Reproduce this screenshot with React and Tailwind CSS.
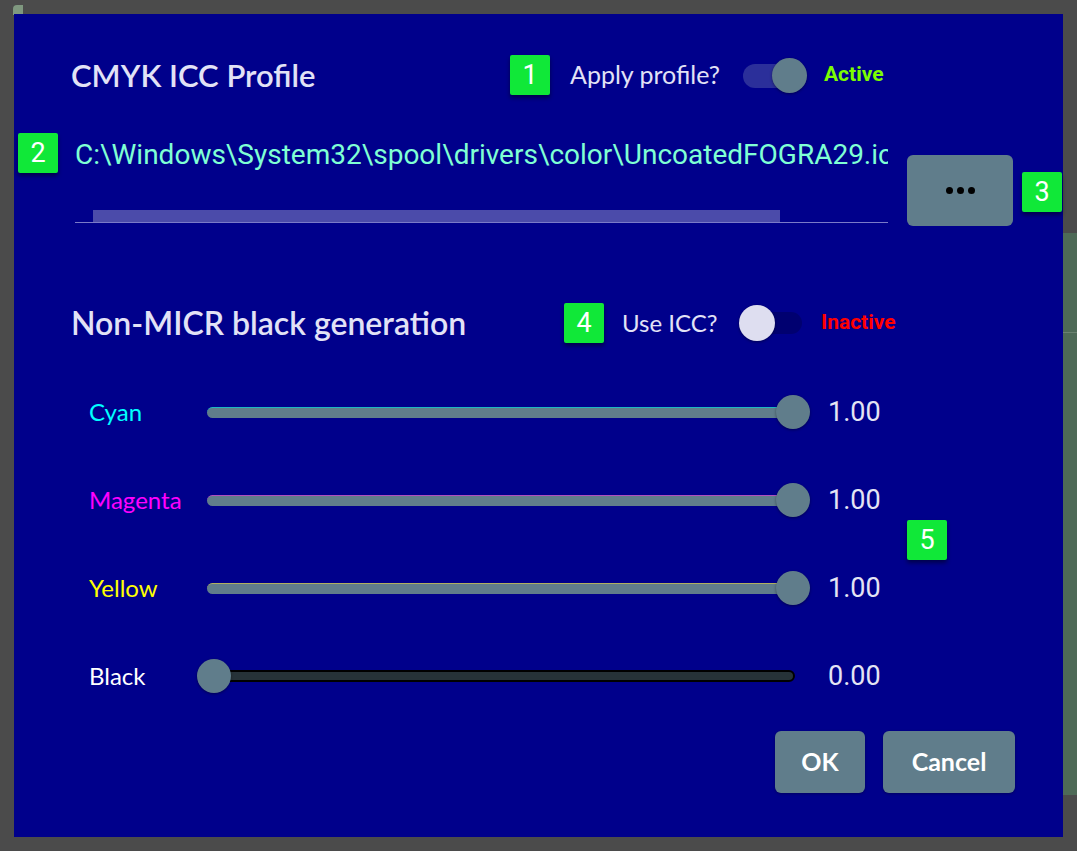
import React from 'react';

const sans = { fontFamily: 'Lato, "Open Sans", sans-serif' };
const roboto = { fontFamily: 'Roboto, "Liberation Sans", sans-serif' };

const Badge = ({ n, className = '' }) => (
  <div
    className={`flex h-[40px] w-[40px] items-center justify-center rounded-[2px] bg-[#10e838] text-[27px] leading-none text-white shadow-[0_3px_4px_rgba(0,0,0,0.45)] ${className}`}
    style={roboto}
  >
    {n}
  </div>
);

const channels = [
  { name: 'Cyan', color: 'text-[#00ffff]', edge: 'border-[#1fb7c0]', value: 1 },
  { name: 'Magenta', color: 'text-[#ff00ff]', edge: 'border-[#b050c0]', value: 1 },
  { name: 'Yellow', color: 'text-[#ffff00]', edge: 'border-[#b0b060]', value: 1 },
  { name: 'Black', color: 'text-white', edge: '', value: 0 },
];

const SliderRow = ({ name, color, edge, value }) => (
  <div className="flex h-[44px] items-center">
    <div className={`ml-[18px] w-[118px] text-[24px] ${color}`} style={sans}>
      {name}
    </div>
    <div className="relative flex h-[44px] w-[588px] items-center">
      {value > 0 ? (
        <div className={`h-[11px] w-full rounded-full border-t bg-[#607d8b] ${edge}`} />
      ) : (
        <div className="h-[12px] w-full rounded-full border-2 border-black bg-[#263238]" />
      )}
      <div
        className="absolute top-[5px] h-[34px] w-[34px] rounded-full bg-[#607d8b] shadow-[0_1px_3px_rgba(0,0,0,0.4)]"
        style={{ left: -10 + value * 579 }}
      />
    </div>
    <div className="ml-[33px] text-[27px] text-[#e4e4f4]" style={roboto}>
      {value.toFixed(2)}
    </div>
  </div>
);

export default function App() {
  return (
    <div className="relative h-[851px] w-[1077px] overflow-hidden bg-[#4b4b4b]">
      {/* stuff behind the dialog */}
      <div className="absolute left-[13px] top-[5px] h-[10px] w-[10px] rounded-tl-[4px] bg-[#7f987f]" />
      <div className="absolute left-[1063px] top-[233px] h-[562px] w-[14px] bg-[#4e6a57]">
        <div className="mt-[99px] h-px w-full bg-[#6b8270]" />
      </div>

      <div className="pl-[14px] pt-[14px]">
        <div className="relative h-[823px] w-[1049px] bg-[#00008b] pl-[57px] pr-[48px] pt-[41px]">
          {/* row 1 */}
          <div className="flex h-[40px] items-center">
            <div className="w-[439px] text-[31px] font-semibold text-[#e2e2f6]" style={sans}>
              CMYK ICC Profile
            </div>
            <Badge n="1" />
            <div className="ml-[20px] w-[173px] text-[25px] text-[#e2e2f6]" style={sans}>
              Apply profile?
            </div>
            <div className="relative h-[35px] w-[63px]">
              <div className="absolute left-0 top-[6px] h-[24px] w-[58px] rounded-full bg-[#2b2f9a]" />
              <div className="absolute left-[29px] top-0 h-[35px] w-[35px] rounded-full bg-[#607d8b] shadow-[0_1px_3px_rgba(0,0,0,0.4)]" />
            </div>
            <div className="ml-[18px] text-[21px] font-bold text-[#7cfc00]" style={roboto}>
              Active
            </div>
          </div>

          {/* row 2: path field */}
          <div className="mt-[44px] flex items-start">
            <div className="ml-[4px] w-[813px]">
              <div className="h-[32px] overflow-hidden whitespace-nowrap text-[28px] leading-[32px] text-[#7fffd4]" style={roboto}>
                C:\Windows\System32\spool\drivers\color\UncoatedFOGRA29.icc
              </div>
              <div className="mt-[39px] ml-[18px] h-[12px] w-[687px] bg-[#4b4baa]" />
              <div className="h-px w-full bg-[#7a7ac8]" />
            </div>
            <button className="ml-[19px] mt-[16px] flex h-[71px] w-[106px] items-center justify-center gap-[4px] rounded-[6px] bg-[#607d8b]">
              <span className="h-[7px] w-[7px] rounded-full bg-black" />
              <span className="h-[7px] w-[7px] rounded-full bg-black" />
              <span className="h-[7px] w-[7px] rounded-full bg-black" />
            </button>
          </div>

          {/* row 4 */}
          <div className="mt-[77px] flex h-[40px] items-center">
            <div className="w-[493px] text-[32px] font-semibold text-[#e2e2f6]" style={sans}>
              Non-MICR black generation
            </div>
            <Badge n="4" />
            <div className="ml-[18px] w-[117px] text-[24px] text-[#e2e2f6]" style={sans}>
              Use ICC?
            </div>
            <div className="relative h-[36px] w-[63px]">
              <div className="absolute left-[5px] top-[7px] h-[22px] w-[58px] rounded-full bg-[#000070]" />
              <div className="absolute left-0 top-0 h-[36px] w-[36px] rounded-full bg-[#dedef0] shadow-[0_1px_3px_rgba(0,0,0,0.4)]" />
            </div>
            <div className="ml-[19px] text-[21px] font-bold text-[#ff0000]" style={roboto}>
              Inactive
            </div>
          </div>

          {/* sliders */}
          <div className="mt-[47px] flex flex-col gap-[44px]">
            {channels.map((c) => (
              <SliderRow key={c.name} {...c} />
            ))}
          </div>

          {/* buttons */}
          <div className="mt-[33px] flex justify-end gap-[18px]">
            <button className="h-[62px] w-[90px] rounded-[6px] bg-[#607d8b] text-[25px] font-bold text-white shadow-[0_1px_3px_rgba(0,0,0,0.3)]" style={sans}>
              OK
            </button>
            <button className="h-[62px] w-[132px] rounded-[6px] bg-[#607d8b] text-[25px] font-bold text-white shadow-[0_1px_3px_rgba(0,0,0,0.3)]" style={sans}>
              Cancel
            </button>
          </div>

          {/* annotation badges */}
          <Badge n="2" className="absolute left-[4px] top-[119px]" />
          <Badge n="3" className="absolute left-[1008px] top-[158px]" />
          <Badge n="5" className="absolute left-[893px] top-[506px]" />
        </div>
      </div>
    </div>
  );
}
